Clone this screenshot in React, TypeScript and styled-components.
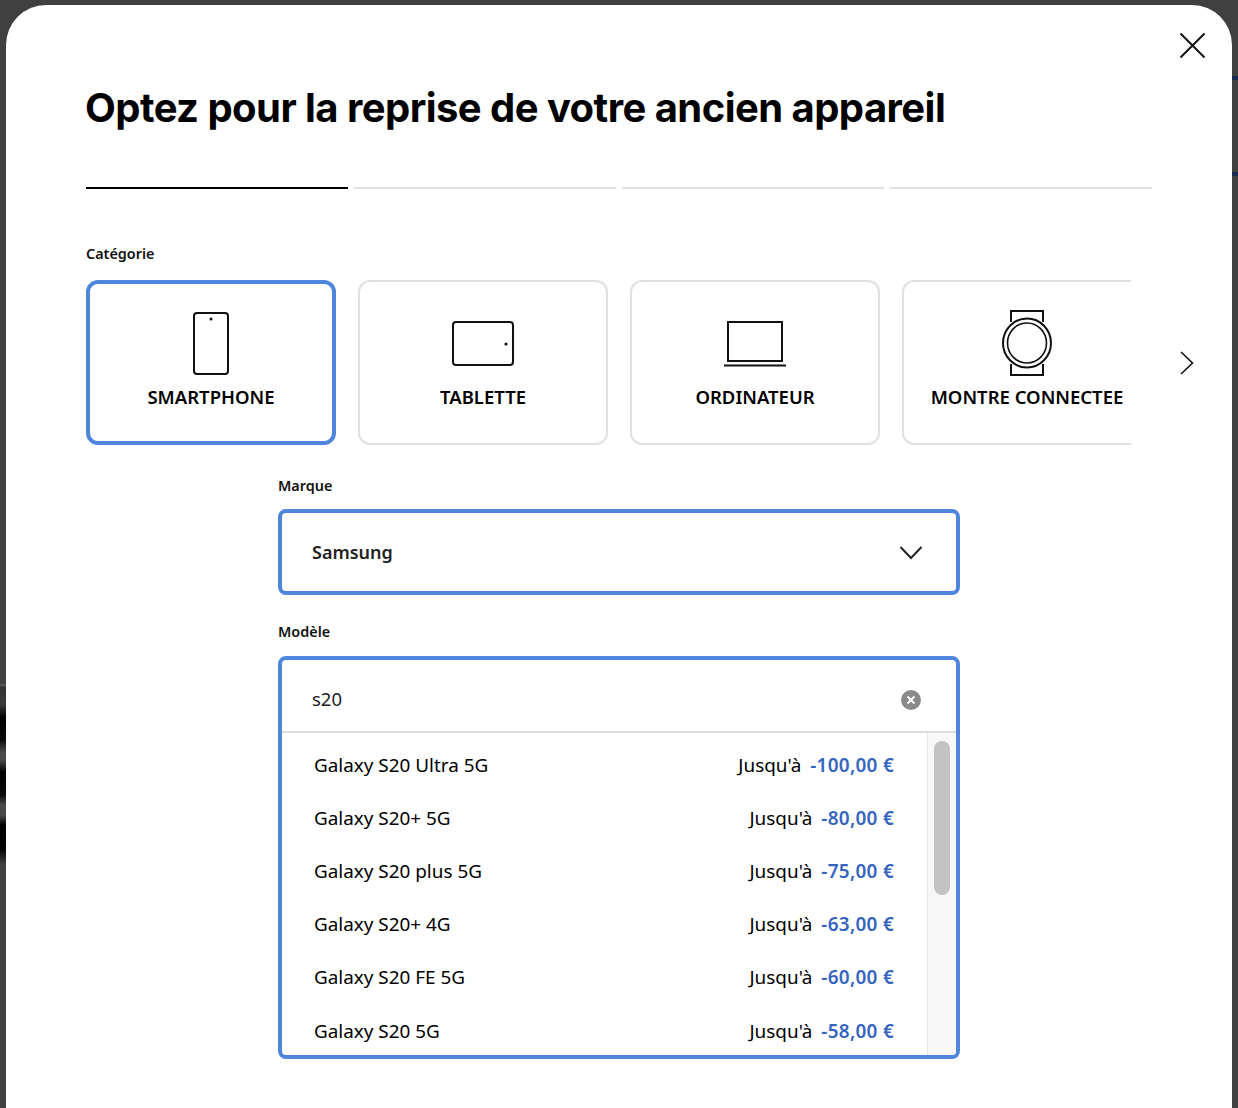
import React from 'react';
import styled, { createGlobalStyle } from 'styled-components';

const GlobalStyle = createGlobalStyle`
  html, body {
    margin: 0;
    padding: 0;
    height: 100%;
    overflow: hidden;
    background: #404040;
  }
  * {
    box-sizing: border-box;
  }
`;

const Backdrop = styled.div`
  height: 1108px;
  overflow: hidden;
  padding: 5px 6px 0;
  font-family: 'Noto Sans', 'Liberation Sans', sans-serif;
  color: #000;
  background-color: #404040;
  background-image:
    linear-gradient(
      to bottom,
      transparent 684px,
      #666 685px,
      #333 687px,
      #3c3c3c 704px,
      #000 718px,
      #0a0a0a 740px,
      #4a4a4a 752px,
      #4a4a4a 760px,
      #000 772px,
      #0a0a0a 795px,
      #4a4a4a 805px,
      #4a4a4a 815px,
      #000 825px,
      #050505 850px,
      #404040 864px
    ),
    linear-gradient(
      to bottom,
      transparent 76px,
      #172a4f 76px,
      #172a4f 80px,
      transparent 80px,
      transparent 172px,
      #172a4f 172px,
      #172a4f 176px,
      transparent 176px
    );
  background-size: 6px 100%, 6px 100%;
  background-position: left top, right top;
  background-repeat: no-repeat;
`;

const Modal = styled.div`
  position: relative;
  height: 1200px;
  padding: 83px 80px 0;
  background: #fff;
  border-radius: 40px;
`;

const CloseButton = styled.button`
  position: absolute;
  top: 27px;
  right: 26px;
  width: 27px;
  height: 27px;
  padding: 0;
  border: 0;
  background: none;
  display: block;
`;

const Title = styled.h1`
  margin: 0 0 0 -1px;
  height: 41px;
  font-family: 'Inter', 'Liberation Sans', sans-serif;
  font-size: 40px;
  line-height: 40px;
  font-weight: 700;
  letter-spacing: -0.55px;
  white-space: nowrap;
`;

const Progress = styled.div`
  display: flex;
  gap: 6px;
  width: 1066px;
  margin-top: 58px;
`;

const ProgressStep = styled.div<{ $active?: boolean }>`
  flex: 1;
  height: 2px;
  background: ${(p) => (p.$active ? '#000' : '#e0e0e0')};
`;

const FieldLabel = styled.div`
  font-size: 14.4px;
  line-height: 20px;
  font-weight: 600;
  color: #111;
`;

const CategoryLabel = styled(FieldLabel)`
  margin-top: 55px;
`;

const Carousel = styled.div`
  display: flex;
  align-items: center;
  margin-top: 16px;
`;

const CardTrack = styled.div`
  display: flex;
  gap: 22px;
  width: 1045px;
  overflow: hidden;
  flex: none;
`;

const Card = styled.div<{ $selected?: boolean }>`
  flex: none;
  width: 250px;
  height: 165px;
  border-radius: 12px;
  border: ${(p) => (p.$selected ? '4px solid #4f86dc' : '2px solid #e0e0e0')};
  padding-top: ${(p) => (p.$selected ? '25px' : '27px')};
  display: flex;
  flex-direction: column;
  align-items: center;
`;

const CardIcon = styled.div`
  height: 68px;
  display: flex;
  align-items: center;
  justify-content: center;
`;

const CardName = styled.div`
  margin-top: 8px;
  font-size: 18.5px;
  line-height: 24px;
  font-weight: 600;
  white-space: nowrap;
`;

const NextArrow = styled.button`
  flex: none;
  margin-left: 48px;
  width: 16px;
  height: 26px;
  padding: 0;
  border: 0;
  background: none;
`;

const Form = styled.div`
  width: 682px;
  margin: 31px 0 0 192px;
`;

const Select = styled.div`
  margin-top: 13px;
  height: 86px;
  border: 4px solid #4f86dc;
  border-radius: 8px;
  padding: 0 33px 0 30px;
  display: flex;
  align-items: center;
  justify-content: space-between;
  font-size: 18px;
  font-weight: 600;
  color: #222;
`;

const ModelLabel = styled(FieldLabel)`
  margin-top: 27px;
`;

const Combo = styled.div`
  margin-top: 14px;
  height: 403px;
  border: 4px solid #4f86dc;
  border-radius: 8px;
  overflow: hidden;
  display: flex;
  flex-direction: column;
`;

const SearchRow = styled.div`
  flex: none;
  height: 73px;
  border-bottom: 2px solid #ddd;
  padding: 6px 35px 0 30px;
  display: flex;
  align-items: center;
  justify-content: space-between;
  font-size: 18.5px;
  color: #222;
`;

const ClearIcon = styled.svg`
  margin-top: 2px;
`;

const Results = styled.div`
  flex: 1;
  display: flex;
  min-height: 0;
`;

const ResultList = styled.div`
  flex: 1;
  padding: 5px 33px 0 32px;
  overflow: hidden;
`;

const ResultRow = styled.div`
  height: 53.2px;
  display: flex;
  align-items: center;
  justify-content: space-between;
  font-size: 18.9px;
  white-space: nowrap;
`;

const Price = styled.span`
  display: flex;
  gap: 9px;
`;

const Amount = styled.span`
  color: #3565c0;
  font-weight: 600;
  letter-spacing: 0.3px;
`;

const ScrollTrack = styled.div`
  flex: none;
  width: 29px;
  padding: 8px 6px 0 6px;
  background: #f8f8f8;
  border-left: 1px solid #e6e6e6;
`;

const ScrollThumb = styled.div`
  height: 154px;
  border-radius: 8px;
  background: #c3c3c3;
`;

const Phone = () => (
  <svg width="38" height="66" viewBox="0 0 38 66" fill="none" stroke="#111" strokeWidth="2">
    <rect x="2" y="3" width="34" height="61" rx="3" />
    <circle cx="19" cy="9" r="1.5" fill="#111" stroke="none" />
  </svg>
);

const Tablet = () => (
  <svg width="64" height="47" viewBox="0 0 64 47" fill="none" stroke="#111" strokeWidth="2">
    <rect x="2" y="2" width="60" height="43" rx="3" />
    <circle cx="55" cy="24" r="1.6" fill="#111" stroke="none" />
  </svg>
);

const Laptop = () => (
  <svg width="64" height="47" viewBox="0 0 64 47" fill="none" stroke="#111" strokeWidth="2">
    <rect x="5" y="2" width="54" height="39" />
    <path d="M1 45.5h62" />
  </svg>
);

const Watch = () => (
  <svg width="52" height="66" viewBox="0 0 52 66" fill="none" stroke="#111">
    <path d="M10 12V1h32v11M10 54v11h32V54" strokeWidth="2" />
    <ellipse cx="26" cy="33" rx="24" ry="24.5" strokeWidth="2" />
    <ellipse cx="26" cy="33" rx="19.5" ry="20" strokeWidth="1.6" />
  </svg>
);

const categories = [
  { name: 'SMARTPHONE', icon: <Phone /> },
  { name: 'TABLETTE', icon: <Tablet /> },
  { name: 'ORDINATEUR', icon: <Laptop /> },
  { name: 'MONTRE CONNECTEE', icon: <Watch /> },
];

const models = [
  { name: 'Galaxy S20 Ultra 5G', price: '-100,00 €' },
  { name: 'Galaxy S20+ 5G', price: '-80,00 €' },
  { name: 'Galaxy S20 plus 5G', price: '-75,00 €' },
  { name: 'Galaxy S20+ 4G', price: '-63,00 €' },
  { name: 'Galaxy S20 FE 5G', price: '-60,00 €' },
  { name: 'Galaxy S20 5G', price: '-58,00 €' },
];

export default function App() {
  return (
    <Backdrop>
      <GlobalStyle />
      <Modal>
        <CloseButton aria-label="Fermer">
          <svg width="27" height="27" viewBox="0 0 27 27" stroke="#111" strokeWidth="2" fill="none">
            <path d="M1.5 1.5l24 24M25.5 1.5l-24 24" />
          </svg>
        </CloseButton>
        <Title>Optez pour la reprise de votre ancien appareil</Title>
        <Progress>
          <ProgressStep $active />
          <ProgressStep />
          <ProgressStep />
          <ProgressStep />
        </Progress>
        <CategoryLabel>Catégorie</CategoryLabel>
        <Carousel>
          <CardTrack>
            {categories.map((c, i) => (
              <Card key={c.name} $selected={i === 0}>
                <CardIcon>{c.icon}</CardIcon>
                <CardName>{c.name}</CardName>
              </Card>
            ))}
          </CardTrack>
          <NextArrow aria-label="Suivant">
            <svg width="16" height="26" viewBox="0 0 16 26" stroke="#111" strokeWidth="1.6" fill="none">
              <path d="M2 2l11.5 11L2 24" />
            </svg>
          </NextArrow>
        </Carousel>
        <Form>
          <FieldLabel>Marque</FieldLabel>
          <Select>
            Samsung
            <svg width="24" height="15" viewBox="0 0 24 15" stroke="#222" strokeWidth="2" fill="none">
              <path d="M1.5 2l10.5 11L22.5 2" />
            </svg>
          </Select>
          <ModelLabel>Modèle</ModelLabel>
          <Combo>
            <SearchRow>
              s20
              <ClearIcon width="20" height="20" viewBox="0 0 20 20" fill="none">
                <circle cx="10" cy="10" r="10" fill="#8a8a8a" />
                <path d="M6.5 6.5l7 7M13.5 6.5l-7 7" stroke="#fff" strokeWidth="1.8" />
              </ClearIcon>
            </SearchRow>
            <Results>
              <ResultList>
                {models.map((m) => (
                  <ResultRow key={m.name}>
                    <span>{m.name}</span>
                    <Price>
                      <span>Jusqu'à</span>
                      <Amount>{m.price}</Amount>
                    </Price>
                  </ResultRow>
                ))}
              </ResultList>
              <ScrollTrack>
                <ScrollThumb />
              </ScrollTrack>
            </Results>
          </Combo>
        </Form>
      </Modal>
    </Backdrop>
  );
}
